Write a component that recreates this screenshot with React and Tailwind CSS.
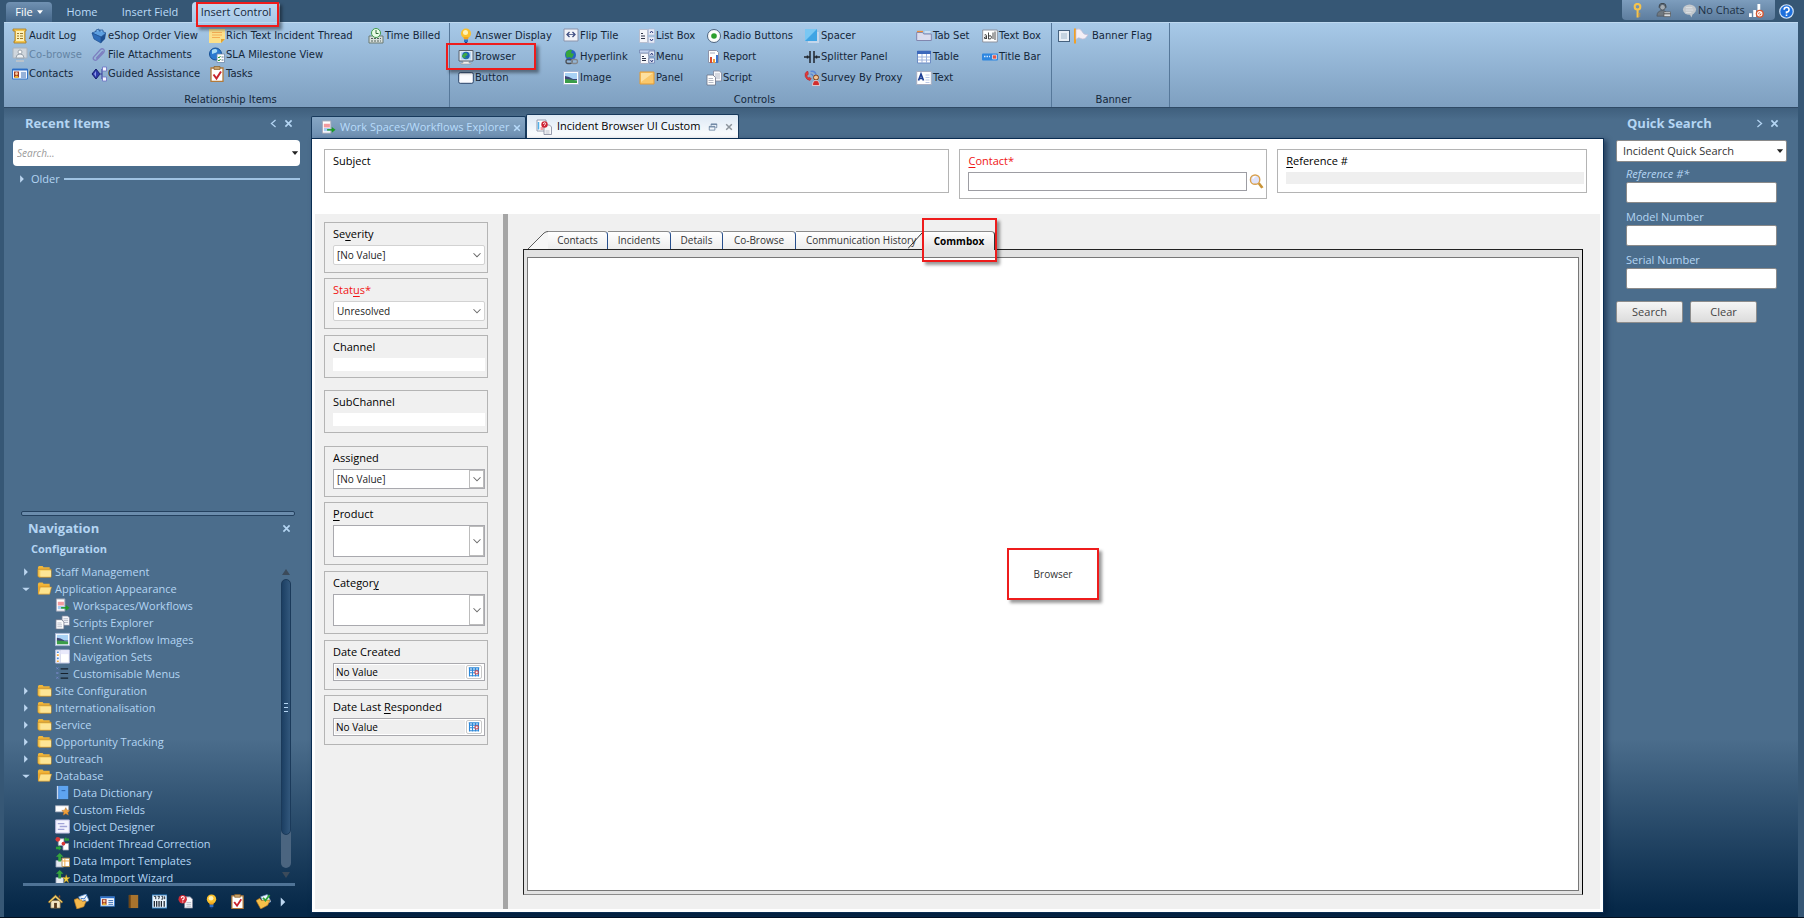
import React from "react";

const OPEN = "font-['Open_Sans','Noto_Sans',sans-serif]";
const DEJA = "font-['DejaVu_Sans',sans-serif]";

const page = (
  <path d="M2.5 1.5h8l2 2v10h-10z" fill="#fff" stroke="#8d93a8" />
);

const icons = {
  auditLog: (
    <>
      <path d="M3 1h11v2h-1v10h1v2H2v-2h1V3H1V1z" fill="#f3c64f" stroke="#a9781c" strokeWidth=".8" />
      <path d="M4 3h8v10H4z" fill="#fdf0b8" />
      <path d="M5 5.5h2M8 5.5h3M5 8h2M8 8h3M5 10.500h2M8 10.500h3" stroke="#9c7a2b" />
    </>
  ),
  cobrowse: (
    <>
      <path d="M1 1h14v10H1z" fill="#cfd6dd" stroke="#a9b3bd" />
      <circle cx="8" cy="5" r="2" fill="#fff" stroke="#9aa4ae" />
      <path d="M4 11q0-4 4-4t4 4z" fill="#eef1f4" stroke="#9aa4ae" />
      <path d="M4 13h8v2H4z" fill="#b9c2cb" />
    </>
  ),
  contacts: (
    <>
      <path d="M.5 3h15v10H.5z" fill="#f3f8ff" stroke="#3577c9" />
      <path d="M0 3h16v1.500H0z" fill="#2d6ec6" />
      <path d="M2 5.500h5v6H2z" fill="#a23a22" />
      <circle cx="4.500" cy="7.500" r="1.500" fill="#f6c79c" />
      <path d="M2.500 12q0-2.500 2-2.500t2 2.500z" fill="#e8b637" />
      <path d="M9 7h5M9 9h5M9 11h5" stroke="#3a6db3" />
    </>
  ),
  eshop: (
    <>
      <path d="M1 5l7-3 7 3-5 4z" fill="#5d9fe0" stroke="#1e4f91" strokeWidth=".7" />
      <path d="M1 5l9 4v6l-7-4z" fill="#2e6dba" stroke="#1e4f91" strokeWidth=".7" />
      <path d="M10 9l5-4-1 6-4 4z" fill="#1d4f92" />
      <path d="M5 4V2l3-1v2M9 4V2l3 0v2" fill="#78b4ec" stroke="#1e4f91" strokeWidth=".7" />
    </>
  ),
  clip: (
    <path
      d="M13 5l-7 7.500q-1.500 1.500-3 .3t-.2-3L9.500 2.500q1.500-1.500 3-.2t.2 3.200L6.500 12M11.500 4.500L5.500 11"
      fill="none"
      stroke="#7d7fc0"
      strokeWidth="1.300"
      strokeLinecap="round"
    />
  ),
  guided: (
    <>
      <path d="M1 8l4-5 4 5-4 5z" fill="#2c39a8" stroke="#151d6d" />
      <path d="M3 8l2-3v6z" fill="#8d98e8" />
      <path d="M8 8h3M11 3v10M11 3h1M11 13h1" stroke="#3a3f9c" fill="none" />
      <path d="M11.500 1h4v4h-4zM11.500 11h4v4h-4z" fill="#f5f6ff" stroke="#6a6fc4" strokeWidth=".8" />
    </>
  ),
  note: (
    <>
      <path d="M0 1h16v10l-4 4H0z" fill="#fbe08a" />
      <path d="M3 4.500h10M3 7h10M3 9.500h8" stroke="#f3a64e" strokeWidth=".9" />
      <path d="M16 11l-4 4v-4z" fill="#e2a22f" />
    </>
  ),
  sla: (
    <>
      <circle cx="6.500" cy="7" r="6" fill="#2b7ad0" stroke="#154f93" />
      <path d="M3 3q4-2 5 0t-2 3-3 1z" fill="#a8dcf5" />
      <path d="M8 7h7.500v8.500H8z" fill="#fff" stroke="#6e88a8" strokeWidth=".8" />
      <path d="M9 10l1 1 1.500-2M9 13l1 1 1.500-2" stroke="#2b9c34" fill="none" />
      <path d="M12.500 10h2M12.500 13h2" stroke="#5c6f8d" />
    </>
  ),
  tasks: (
    <>
      <path d="M2 2h12v13.500H2z" fill="#fff" stroke="#b27a3a" strokeWidth="1.300" />
      <path d="M5 .5h6v3H5z" fill="#c9a36a" stroke="#8a5d24" strokeWidth=".7" />
      <path d="M4.500 8.500l3 4 4.500-7" fill="none" stroke="#c8232d" strokeWidth="2" />
    </>
  ),
  timeBilled: (
    <>
      <path d="M1 8h14v7H1z" fill="#d8dfdc" stroke="#6b7a73" />
      <path d="M3 10.500h2M6 10.500h2M9 10.500h2M12 10.500h1M3 13h2M6 13h2M9 13h2M12 13h1" stroke="#55645d" />
      <circle cx="8" cy="5" r="4.500" fill="#e9fbe7" stroke="#3f9a4a" />
      <path d="M8 2v3.500h2.500" fill="none" stroke="#2d6b35" />
    </>
  ),
  bulb: (
    <>
      <circle cx="8" cy="5.500" r="5" fill="#fbc12d" />
      <circle cx="7.500" cy="4.500" r="2.500" fill="#fff3b8" />
      <path d="M5.500 9h5l-.5 2.500h-4z" fill="#f3a31d" />
      <path d="M6 11.500h4V14H6z" fill="#2f6fc4" />
      <path d="M6.500 14h3l-1 1.500h-1z" fill="#1c3f7c" />
    </>
  ),
  browser: (
    <>
      <path d="M1 1.500h14v10.500H1z" fill="#e4ecf5" stroke="#59616d" />
      <path d="M3 3h10v7.500H3z" fill="#b5d5f2" />
      <circle cx="8" cy="6.500" r="3.700" fill="#1c62b7" />
      <path d="M5.500 5q2-2 3.500-.5t-1 2.500 1 2-2 0-1.500-4z" fill="#3ea848" />
      <path d="M5 12.500h6v1.500h2v1H3v-1h2z" fill="#f0f0f0" stroke="#8c8c8c" strokeWidth=".5" />
    </>
  ),
  button: (
    <rect x=".7" y="2.700" width="14.600" height="10.600" rx="1.500" fill="#fbfcff" stroke="#2a4469" />
  ),
  flip: (
    <>
      <path d="M1 1h14v12H1z" fill="#f1f3f8" stroke="#8b93ab" />
      <path d="M6.500 4L4 6.500 6.500 9M9.500 4L12 6.500 9.500 9" fill="none" stroke="#3d4c80" strokeWidth="1.300" />
      <path d="M4 6.500h8" stroke="#3d4c80" strokeWidth=".8" />
    </>
  ),
  hyperlink: (
    <>
      <circle cx="7.500" cy="6" r="5.500" fill="#2a62c4" />
      <path d="M3 3q3-3 6-2l-1 3 3 1-2 4-3-1-2 1q-2-3-1-6z" fill="#35a53c" />
      <rect x="3" y="10.500" width="6" height="4" rx="2" fill="none" stroke="#4b4f55" strokeWidth="1.300" />
      <rect x="8.500" y="10.500" width="6" height="4" rx="2" fill="none" stroke="#84888d" strokeWidth="1.300" />
    </>
  ),
  image: (
    <>
      <path d="M.5 1.500h15v13H.5z" fill="#fff" stroke="#a6b6d6" />
      <path d="M2 3h12v10H2z" fill="#a9d2f5" />
      <path d="M2 6l4 1 4 2 4 0v1H2z" fill="#3d4377" />
      <path d="M2 9q5 0 12 1.500V13H2z" fill="#3a9c48" />
    </>
  ),
  listBox: (
    <>
      <path d="M.5 1.500h8v13h-8z" fill="#f4f5fa" stroke="#b8bfd0" />
      <path d="M2 5.500h2M2 8h4M2 10.500h4" stroke="#30354a" />
      <path d="M9.500 1h6v6h-6zM9.500 9h6v6h-6z" fill="#e7ecf8" stroke="#b4bcd6" strokeWidth=".7" />
      <path d="M11 5l1.500-2L14 5M11 11l1.500 2 1.500-2" fill="none" stroke="#2c3a7c" />
    </>
  ),
  menu: (
    <>
      <path d="M.5 1h15v3H.5z" fill="#c5d3ee" stroke="#6c7eaa" strokeWidth=".7" />
      <path d="M1.500 4.500h8v10h-8z" fill="#f6f7fb" stroke="#a7afc4" />
      <path d="M3 7.500h2M3 9.500h4M3 11.500h4" stroke="#30354a" />
      <path d="M10 2h5.500v5H10zM10 9h5.500v5H10z" fill="#e7ecf8" stroke="#6678ad" strokeWidth=".7" />
      <path d="M11.500 6l1.200-2L14 6M11.500 11l1.200 2 1.300-2" fill="none" stroke="#2c3a7c" />
    </>
  ),
  panel: (
    <>
      <path d="M1 2h14v12H1z" fill="#fbc96c" stroke="#e39b35" />
      <path d="M2 3h12L2 12z" fill="#fde0a0" />
    </>
  ),
  radio: (
    <>
      <circle cx="8" cy="8" r="6.500" fill="#fbfdfb" stroke="#4d6480" />
      <circle cx="8" cy="8" r="2.800" fill="#2ca02c" />
    </>
  ),
  report: (
    <>
      {page}
      <path d="M4 8h2v6H4z" fill="#d84a33" />
      <path d="M7 10h2v4H7z" fill="#f0a03a" />
      <path d="M10 6h2v8h-2z" fill="#3c74cc" />
      <path d="M4 4h5" stroke="#a8aec0" />
    </>
  ),
  script: (
    <>
      <path d="M7.500 1h6l2 2v8h-8z" fill="#f6f7fb" stroke="#7d8398" strokeWidth=".8" />
      <path d="M9 4h5M9 6h5M9 8h5" stroke="#a3a8b8" strokeWidth=".8" />
      <path d="M1 5h6l2.500 2.500V15H1z" fill="#fff" stroke="#6d7388" strokeWidth=".8" />
      <path d="M2.500 8.500H7M2.500 10.500h5M2.500 12.500h5" stroke="#a3a8b8" strokeWidth=".8" />
    </>
  ),
  spacer: (
    <>
      <path d="M4 4h11v11H4z" fill="#d4dff0" opacity=".7" />
      <path d="M1 1h12v12H1z" fill="#3fa4e4" />
      <path d="M1 1h12L1 13z" fill="#79c7f3" />
    </>
  ),
  splitter: (
    <path d="M0 8h6M10 8h6M6 2v12M10 2v12M3.500 6.500v3M12.500 6.500v3" stroke="#20262e" strokeWidth="1.500" fill="none" />
  ),
  survey: (
    <>
      <path d="M3.500 1Q0 3 1.200 6.500T6 10.500l1.200-2-2-1.300-1 .8Q2.800 6.500 3 5l1.300-.6-.2-2.300z" fill="#e23b3b" stroke="#a81f24" strokeWidth=".5" />
      <path d="M6.500 1.500q4.500-1 5.500 3M6.500 4q2 0 2.500 2" fill="none" stroke="#5c86d8" strokeWidth="1.400" />
      <circle cx="12" cy="7.500" r="2.500" fill="#f4c391" stroke="#7b3d1a" />
      <path d="M8.500 15.500q0-5 3.500-5t3.500 5z" fill="#d12d2d" stroke="#fff" strokeWidth=".6" />
    </>
  ),
  tabSet: (
    <>
      <path d="M.7 12.500V4.500h6l1 1.500h7.600v6.500z" fill="#dadcee" stroke="#8186ae" />
      <path d="M1 3.500h6" stroke="#ee8f3c" strokeWidth="1.300" />
      <path d="M8.500 4h6" stroke="#f7f8ff" />
    </>
  ),
  table: (
    <>
      <path d="M1.500 2h13v12h-13z" fill="#fff" stroke="#6d8cc4" />
      <path d="M1 2h14v3H1z" fill="#3c68bb" />
      <path d="M6 5v9M10.500 5v9M2 8h12M2 11h12" stroke="#9db2dc" />
    </>
  ),
  text: (
    <>
      <path d="M.7 1.500h14.600v13H.7z" fill="#fff" stroke="#a7aec2" />
      <path d="M2.500 10.500L5 4l2.500 6.500M3.500 8.500h3" fill="none" stroke="#1d3f95" strokeWidth="1.700" />
      <path d="M9.500 5h4M9.500 7.500h4M9.500 10h4M9.500 12.500h4" stroke="#a9bbe2" strokeWidth=".8" />
    </>
  ),
  textBox: (
    <>
      <path d="M.7 2h14.600v12H.7z" fill="#fff" stroke="#8e939f" />
      <path
        d="M2.500 7q2-1 2 .8V11M4.500 8.800q-2.300 0-2.300 1.200t2.300.3M6.500 4.500V11q3 .5 3-1.800T6.500 8M11 4.500V11M13 3.500V12"
        fill="none"
        stroke="#333"
        strokeWidth=".9"
      />
    </>
  ),
  titleBar: (
    <>
      <rect x="0" y="4.500" width="16" height="7" rx="1" fill="#2d86e0" />
      <path d="M2 7.500h6" stroke="#cfe6ff" strokeWidth="1.500" strokeDasharray="1.500 1" />
      <path d="M10.500 6h4v4h-4z" fill="#e0584a" stroke="#fff" strokeWidth=".6" />
    </>
  ),
  flag: (
    <>
      <path d="M1 .5h2v15H1z" fill="#f0a026" />
      <path d="M3 1.500q4-2 6 2t6 3q-3 6-7 4-3-2-5 1z" fill="#f4eff6" stroke="#c9bfd6" strokeWidth=".7" />
    </>
  ),
  folder: (
    <>
      <path d="M1 3.500l1-1.500h4l1 1.500h6.500v2H1z" fill="#f0b63a" />
      <path d="M1 5.500h14v8.500H2L1 13z" fill="#f7cc5a" stroke="#d18c1c" strokeWidth=".8" />
      <path d="M3.500 7H15v6.500H3.500z" fill="#fde596" />
    </>
  ),
  folderOpen: (
    <>
      <path d="M1 3l1-1.500h4L7 3h6.500v3H1z" fill="#f0b63a" />
      <path d="M1 5h12.500v9H1z" fill="#eba82c" />
      <path d="M3.500 6.500h12L13.500 14H1.500z" fill="#fde38d" stroke="#d18c1c" strokeWidth=".6" />
    </>
  ),
  workspace: (
    <>
      <path d="M1.500 1h9v13h-9z" fill="#fff" stroke="#a4a8b8" />
      <path d="M3 4h6.500v4H3z" fill="#f29a9f" />
      <path d="M3 8.500h6.500V12H3z" fill="#a9cdf4" />
      <path d="M6.500 10.500h6" stroke="#1d9a27" strokeWidth="1.600" />
      <path d="M11.500 7.500l4 3-4 3z" fill="#1d9a27" />
    </>
  ),
  navSets: (
    <>
      <path d="M.7 1h14.600v14H.7z" fill="#fff" stroke="#b9bfe0" />
      <path d="M5.500 1v14" stroke="#c3c8e4" />
      <path d="M6 1.500h9v4H6z" fill="#e9e9fb" />
      <path d="M2 3.500h2M2 10h2" stroke="#4d8be0" strokeWidth="1.700" />
      <path d="M2 6.500h2M2 13h2" stroke="#f5a93e" strokeWidth="1.700" />
    </>
  ),
  customMenus: (
    <>
      <path d="M6 3h8M6 8h8M6 13h8" stroke="#16202c" strokeWidth="1.300" />
      <path d="M1.500 1.500l2 2M3.500 1.500l-2 2M1.500 6.500l2 2M3.500 6.500l-2 2M1.500 11.500l2 2M3.500 11.500l-2 2" stroke="#7486c4" />
    </>
  ),
  dictionary: (
    <>
      <path d="M2 1h12v14H2z" fill="#3d86dd" />
      <path d="M4.500 1H14v14H4.500z" fill="#5ea4f0" />
      <path d="M2 1h1.500v14H2z" fill="#c9d7ec" />
      <path d="M7 6h4" stroke="#2b62ac" />
    </>
  ),
  customFields: (
    <>
      <path d="M.5 4h14v6.500H.5z" fill="#fff" stroke="#a9b0c0" strokeWidth=".8" />
      <path d="M11.500 6l1.300 2.700 3 .3-2.200 2 .7 3-2.800-1.600L8.700 14l.7-3-2.200-2 3-.3z" fill="#f0a03a" stroke="#a8682a" strokeWidth=".5" />
    </>
  ),
  objectDesigner: (
    <>
      <path d="M.7 1h14.600v14H.7z" fill="#f4f4ff" stroke="#b7b9de" />
      <path d="M3 5h7M5 8h8M3 11h7" stroke="#a2a4d8" strokeWidth="1.400" />
    </>
  ),
  thread: (
    <>
      <path d="M3.500 3h6v7h-6zM8.500 8h6v7h-6z" fill="#fff" stroke="#9da1b4" strokeWidth=".8" />
      <circle cx="3" cy="3.500" r="2.500" fill="#d93636" />
      <circle cx="9" cy="8" r="2" fill="#d93636" />
      <path d="M9.500 3.500L12 1v1.700h3V5h-3v1z" fill="#2ba338" />
      <path d="M1 11.500h3V10l3 3-3 2.500V14H1z" fill="#2ba338" />
    </>
  ),
  importTemplates: (
    <>
      <path d="M1 8h8v7H1z" fill="#e6ebf2" stroke="#8f9ab0" strokeWidth=".8" />
      <path d="M7.500 5.500h8v9h-8z" fill="#fff" stroke="#b58f4c" />
      <path d="M8 8.500h7M10.500 6v8" stroke="#f1a33a" />
      <path d="M5 0l4 4H6.500v5h-3V4H1z" fill="#35a53c" />
    </>
  ),
  importWizard: (
    <>
      <path d="M1 8h8v7H1z" fill="#e6ebf2" stroke="#8f9ab0" strokeWidth=".8" />
      <path d="M12 5l1 3h3l-2.500 2 1 3.500L12 11.500 9.500 13.500l1-3.500L8 8h3z" fill="#f4d23d" stroke="#a8862a" strokeWidth=".5" />
      <path d="M5 0l4 4H6.500v5h-3V4H1z" fill="#35a53c" />
    </>
  ),
  home: (
    <>
      <path d="M3 7h10v8H3z" fill="#f5e6c4" stroke="#8d6b3b" strokeWidth=".7" />
      <path d="M0 8.500L8 1l8 7.500-1.500 1L8 4 1.500 9.500z" fill="#f2cf6d" stroke="#7c5a1e" strokeWidth=".7" />
      <path d="M6.500 9.500h3V15h-3z" fill="#5a3a1c" />
      <path d="M11.500 1.500H13v3l-1.500-1.500z" fill="#9b4a24" />
    </>
  ),
  mailFolder: (
    <>
      <path d="M5 3l8-3 3 7-8 4z" fill="#f4f8fd" stroke="#4f87c7" strokeWidth=".8" />
      <path d="M7 4.500l4 .8 2.500-4M8.500 8l4-1.500" fill="none" stroke="#2e6fc0" />
      <path d="M0 6l4-1.500 2 2L8 6l1 2 4-.5-2.500 6L3 16z" fill="#f5b94c" stroke="#b5761e" strokeWidth=".7" />
    </>
  ),
  book: (
    <>
      <path d="M3 1h10v14H3z" fill="#a8742e" />
      <path d="M3 1h2v14H3z" fill="#6d4515" />
    </>
  ),
  barcode: (
    <>
      <path d="M0 1h16v14H0z" fill="#e9f3fb" stroke="#2a7bc0" />
      <path d="M2 2.500h2v3M6 2.500h2L7 5.500M10 2.500h1.500v3H10M13.500 2.500v3" fill="none" stroke="#18222e" />
      <path d="M2.500 7.500v6M5 7.500v6M7.500 7.500v6M10 7.500v6M13 7.500v6" stroke="#18222e" strokeWidth="1.300" />
    </>
  ),
  incident: (
    <>
      <path d="M7 3h6l2.500 2.500V15H7z" fill="#f7f8fb" stroke="#80869a" strokeWidth=".8" />
      <path d="M9 9h5M9 11h5M9 13h5" stroke="#a3a8b8" strokeWidth=".8" />
      <circle cx="5" cy="5.500" r="4.500" fill="#d02c38" />
      <path d="M3.500 4.500q0-1.700 1.600-1.700t1.500 1.500-1.500 1.700v1M5.100 8v1" fill="none" stroke="#fff" strokeWidth="1.200" />
    </>
  ),
  mailCheck: (
    <>
      <path d="M5 3l7-2.500L16 8l-7 4z" fill="#eef5fd" stroke="#6d93c4" strokeWidth=".7" />
      <path d="M0 7l4-2.500 2 2.500 9-.5-2.500 5.500L5 16z" fill="#f5bf4a" stroke="#a96d1a" strokeWidth=".7" />
      <path d="M7.500 4l2.500 3 4.500-6" fill="none" stroke="#2fa53a" strokeWidth="2" />
    </>
  ),
  incidentTab: (
    <>
      <path d="M1 1h9v11H1z" fill="#fff" stroke="#8d93a8" strokeWidth=".9" />
      <path d="M2.500 3v7.500" stroke="#4fb0ea" strokeWidth="1.500" />
      <path d="M4.500 8h3v3h-3z" fill="#f3a1a8" />
      <path d="M8 6h5.500L15.500 8v7.500H8z" fill="#f7f8fb" stroke="#80869a" strokeWidth=".8" />
      <path d="M9.500 12h4M9.500 14h4" stroke="#b0b4c2" strokeWidth=".8" />
      <circle cx="8.500" cy="5.500" r="3.200" fill="#cf2436" />
      <path d="M7.500 5q0-1.300 1-1.300t1 1-1 1.400v.7" fill="none" stroke="#fff" strokeWidth=".9" />
    </>
  ),
  magnifier: (
    <>
      <path d="M9 10l4 5.500 2.500-1.500-4-5z" fill="#c99437" />
      <circle cx="6.500" cy="6" r="5" fill="#dfe3fb" stroke="#d9a04d" strokeWidth="1.500" />
      <path d="M4 5q1-2.500 3-2.500" fill="none" stroke="#fff" strokeWidth="1.300" />
    </>
  ),
  calendar: (
    <>
      <path d="M1.500 2h13v12h-13z" fill="#fff" />
      <path d="M1 2.500h14M2 5.500h12M2 9h12M2 13h12M2 2v12M6 2v12M10 2v12M14 2v12" stroke="#2b87d8" strokeWidth="1.500" />
      <path d="M9.500 6.500h4v4h-4z" fill="#fff" stroke="#c8323a" strokeWidth="1.300" />
    </>
  ),
  key: (
    <>
      <circle cx="8" cy="4" r="3" fill="none" stroke="#f5c34c" strokeWidth="2.200" />
      <path d="M7 7h2.200v8.500H7z" fill="#f5c34c" />
      <path d="M9 11h2v1.200H9zM9 13.200h2v1.300H9z" fill="#d9962b" />
    </>
  ),
  agent: (
    <>
      <circle cx="7" cy="4.500" r="3" fill="#a3abb2" stroke="#4f5861" />
      <path d="M3.500 5Q3 .5 7 .5T10.500 5" fill="none" stroke="#3f4850" strokeWidth="1.200" />
      <path d="M1 14q0-6 6-6 3 0 4 2v4z" fill="#6f7880" stroke="#4a535b" strokeWidth=".7" />
      <path d="M8.500 9.500h7v5h-7z" fill="#d9dde1" stroke="#555" strokeWidth=".7" />
      <path d="M8.500 11.500h7" stroke="#444" />
    </>
  ),
  chat: (
    <>
      <ellipse cx="8" cy="7" rx="7" ry="5.500" fill="#c3c8cd" />
      <path d="M8 11.500l2 4 2-5z" fill="#c3c8cd" />
      <path d="M4 5h7M4 7.500h8M4 10h6" stroke="#dfe3e6" />
    </>
  ),
  signal: (
    <>
      <path d="M0 11h3v4H0zM4.500 7.500h3V15h-3zM9 1h3v14H9z" fill="#fff" />
      <circle cx="11.500" cy="11.500" r="4.300" fill="#d9562f" />
      <circle cx="11.500" cy="11.500" r="2.300" fill="none" stroke="#fff" strokeWidth="1.100" />
      <path d="M10 13l3-3" stroke="#fff" strokeWidth="1.100" />
    </>
  ),
  help: (
    <>
      <circle cx="8" cy="8" r="7.200" fill="#1d6fdc" stroke="#cfe2f7" strokeWidth="1.300" />
      <path d="M5.500 6q0-2.500 2.600-2.500T10.700 6 8 8.600V10M8 11.300v1.500" fill="none" stroke="#fff" strokeWidth="1.700" />
    </>
  ),
  chevron: <path d="M4 6l4 4 4-4" fill="none" stroke="#6a6a6a" strokeWidth="1.200" />,
  caret: <path d="M3 5h10l-5 6z" fill="#222" />,
  close: <path d="M3.500 3.500l9 9M12.500 3.500l-9 9" stroke="currentColor" strokeWidth="2.400" fill="none" />,
  pinLeft: <path d="M11 3L5 8l6 5" stroke="currentColor" strokeWidth="1.800" fill="none" />,
  pinRight: <path d="M5 3l6 5-6 5" stroke="currentColor" strokeWidth="1.800" fill="none" />,
  restore: (
    <path d="M5 3h9v6h-2M5 3v3M5 4h9M2 7h9v6H2zM2 8h9" stroke="#5b7596" strokeWidth="1.200" fill="none" />
  ),
  right: <path d="M5 2l6 6-6 6z" fill="#bcd6f0" />,
  down: <path d="M2 6h12l-6 5z" fill="#bcd6f0" />,
};

function Icon({ name, className = "size-4" }) {
  return (
    <svg viewBox="0 0 16 16" aria-hidden="true" className={`shrink-0 ${className}`}>
      {icons[name]}
    </svg>
  );
}

function Highlight({ className }) {
  return (
    <span
      aria-hidden="true"
      className={`pointer-events-none absolute z-10 border-2 border-[#ee1c1c] shadow-[3px_3px_3px_rgba(0,0,0,0.4)] ${className}`}
    />
  );
}

function RibbonButton({ icon, label, disabled, marked }) {
  return (
    <button
      type="button"
      disabled={disabled}
      className={`relative flex items-center gap-px whitespace-nowrap text-left ${disabled ? "text-[#6484a4]" : "text-[#14273a]"}`}
    >
      <Icon name={icon} />
      {label}
      {marked && <Highlight className="-top-[6px] -left-[12px] h-[27px] w-[90px]" />}
    </button>
  );
}

const relationship = [
  [["auditLog", "Audit Log"], ["cobrowse", "Co-browse", true], ["contacts", "Contacts"]],
  [["eshop", "eShop Order View"], ["clip", "File Attachments"], ["guided", "Guided Assistance"]],
  [["note", "Rich Text Incident Thread"], ["sla", "SLA Milestone View"], ["tasks", "Tasks"]],
  [["timeBilled", "Time Billed"]],
];

const controls = [
  [["bulb", "Answer Display"], ["browser", "Browser"], ["button", "Button"]],
  [["flip", "Flip Tile"], ["hyperlink", "Hyperlink"], ["image", "Image"]],
  [["listBox", "List Box"], ["menu", "Menu"], ["panel", "Panel"]],
  [["radio", "Radio Buttons"], ["report", "Report"], ["script", "Script"]],
  [["spacer", "Spacer"], ["splitter", "Splitter Panel"], ["survey", "Survey By Proxy"]],
  [["tabSet", "Tab Set"], ["table", "Table"], ["text", "Text"]],
  [["textBox", "Text Box"], ["titleBar", "Title Bar"]],
];

function Ribbon() {
  const group = "flex flex-col justify-between border-r border-[#56789a]";
  const title = "text-center leading-[14px]";
  return (
    <div
      className={`flex h-[86px] border-t border-[#bdd8f0] border-b border-b-[#2f4a66] bg-linear-to-b from-[#a7c9e8] to-[#7e9fc0] text-[10px] leading-4 text-[#14273a] ${DEJA}`}
    >
      <section className={`${group} w-[446px] pl-2`}>
        <div className="grid grid-cols-[79px_118px_159px_82px] pt-[5px]">
          {relationship.map((col, i) => (
            <div key={i} className="flex flex-col gap-[3px]">
              {col.map(([icon, label, disabled]) => (
                <RibbonButton key={label} icon={icon} label={label} disabled={disabled} />
              ))}
            </div>
          ))}
        </div>
        <h2 className={title}>Relationship Items</h2>
      </section>
      <section className={`${group} w-[602px] pl-2`}>
        <div className="grid grid-cols-[105px_76px_67px_98px_112px_66px_70px] pt-[5px]">
          {controls.map((col, i) => (
            <div key={i} className="flex flex-col gap-[5px]">
              {col.map(([icon, label]) => (
                <RibbonButton key={label} icon={icon} label={label} marked={label === "Browser"} />
              ))}
            </div>
          ))}
        </div>
        <h2 className={title}>Controls</h2>
      </section>
      <section className={`${group} w-[118px] pl-1.5`}>
        <label className="flex items-center gap-[3px] pt-[5px]">
          <input
            type="checkbox"
            className="size-3 appearance-none border border-[#45617e] bg-[#c4d3e0] shadow-[inset_0_0_0_2px_#e8eff6]"
          />
          <Icon name="flag" />
          Banner Flag
        </label>
        <h2 className={title}>Banner</h2>
      </section>
    </div>
  );
}

function TopBar() {
  const tab = "flex h-5 items-center justify-center text-[11px]";
  return (
    <header className="flex items-end justify-between pl-0.5">
      <nav aria-label="Ribbon tabs" className="flex h-[22px] items-end text-[#bcdcf8]">
        <button
          type="button"
          className={`${tab} w-[46px] gap-1 rounded-t-sm bg-linear-to-b from-[#7091b2] to-[#45678a] text-white`}
        >
          File
          <svg viewBox="0 0 8 5" aria-hidden="true" className="h-1 w-1.5">
            <path d="M0 0h8L4 5z" fill="#fff" />
          </svg>
        </button>
        <button type="button" className={`${tab} w-[60px]`}>Home</button>
        <button type="button" className={`${tab} w-[76px]`}>Insert Field</button>
        <button
          type="button"
          className={`${tab} relative ml-1 w-[88px] rounded-t-sm bg-linear-to-b from-[#c0daf2] to-[#a7c9e8] text-[#14273a]`}
        >
          Insert Control
          <Highlight className="top-0 left-1 h-[25px] w-[83px]" />
        </button>
      </nav>
      <div className="flex h-[22px] items-start gap-1">
        <div className="flex h-5 w-[153px] items-center rounded-b-sm bg-linear-to-b from-[#7d9dbd] to-[#5d7d9e] pl-2 text-[11px] text-[#1d3044]">
          <Icon name="key" className="size-[15px]" />
          <Icon name="agent" className="ml-[11px] size-[15px]" />
          <Icon name="chat" className="ml-[11px] size-[15px]" />
          <span className="ml-px whitespace-nowrap">No Chats</span>
          <Icon name="signal" className="ml-1 size-[15px]" />
        </div>
        <button type="button" aria-label="Help" className="mt-1 mr-1">
          <Icon name="help" className="size-[15px]" />
        </button>
      </div>
    </header>
  );
}

const tree = [
  { label: "Staff Management" },
  {
    label: "Application Appearance",
    children: [
      ["workspace", "Workspaces/Workflows"],
      ["script", "Scripts Explorer"],
      ["image", "Client Workflow Images"],
      ["navSets", "Navigation Sets"],
      ["customMenus", "Customisable Menus"],
    ],
  },
  { label: "Site Configuration" },
  { label: "Internationalisation" },
  { label: "Service" },
  { label: "Opportunity Tracking" },
  { label: "Outreach" },
  {
    label: "Database",
    children: [
      ["dictionary", "Data Dictionary"],
      ["customFields", "Custom Fields"],
      ["objectDesigner", "Object Designer"],
      ["thread", "Incident Thread Correction"],
      ["importTemplates", "Data Import Templates"],
      ["importWizard", "Data Import Wizard"],
    ],
  },
];

const shortcuts = [
  ["home", "Home"],
  ["mailFolder", "Mail"],
  ["contacts", "Contacts"],
  ["book", "Accounts"],
  ["barcode", "Products"],
  ["incident", "Incidents"],
  ["bulb", "Answers"],
  ["tasks", "Tasks"],
  ["mailCheck", "Surveys"],
];

function PanelHeader({ title, pin, className }) {
  return (
    <div className={`flex items-center text-[#b4d5f3] ${className}`}>
      <h2 className="flex-1 text-[13px] leading-5 font-bold">{title}</h2>
      {pin && (
        <button type="button" aria-label={`Collapse ${title}`} className="mr-1">
          <Icon name={pin} className="size-[11px]" />
        </button>
      )}
      <button type="button" aria-label={`Close ${title}`}>
        <Icon name="close" className="size-[11px]" />
      </button>
    </div>
  );
}

function Sidebar() {
  return (
    <aside className="flex w-[307px] shrink-0 flex-col text-[11px] text-[#b4d5f3]">
      <section className="flex flex-1 flex-col pr-[11px] pl-[9px]">
        <PanelHeader title="Recent Items" pin="pinLeft" className="mb-0.5 h-[30px] pr-[6px] pl-3" />
        <div className="relative flex">
          <input
            aria-label="Search recent items"
            placeholder="Search..."
            className="h-[26px] flex-1 rounded-sm bg-white px-1 text-[10px] text-black placeholder:text-[#9a9a9a] placeholder:italic"
          />
          <Icon name="caret" className="absolute top-2 right-0 size-2.5" />
        </div>
        <div className="mt-[5px] flex items-center gap-1 pl-1">
          <Icon name="right" className="size-2.5" />
          <span>Older</span>
          <span className="h-0.5 flex-1 bg-[#9fc3e3]" />
        </div>
      </section>
      <section className="flex flex-col pr-3 pl-[17px]">
        <div className="mr-1 h-[5px] rounded-xs border border-[#24415f] bg-[#6b8cac]" />
        <PanelHeader title="Navigation" className="mt-0.5 pr-[7px] pl-[7px]" />
        <h3 className="pt-px pl-2.5 text-[11px] leading-5 font-bold">Configuration</h3>
        <div className="mt-1 flex h-[319px]">
          <ul className="flex-1 leading-[17px]">
            {tree.map((node) => (
              <li key={node.label}>
                <div className="flex h-[17px] items-center">
                  <Icon name={node.children ? "down" : "right"} className="mr-1.5 size-2.5" />
                  <Icon name={node.children ? "folderOpen" : "folder"} className="size-[15px]" />
                  <span className="ml-[3px] whitespace-nowrap">{node.label}</span>
                </div>
                {node.children && (
                  <ul>
                    {node.children.map(([icon, label]) => (
                      <li key={label} className="flex h-[17px] items-center pl-[34px]">
                        <Icon name={icon} className="size-[15px]" />
                        <span className="ml-[3px] whitespace-nowrap">{label}</span>
                      </li>
                    ))}
                  </ul>
                )}
              </li>
            ))}
          </ul>
          <div aria-hidden="true" className="mr-2 flex w-2.5 flex-col items-center gap-1 pt-1.5 pb-1">
            <svg viewBox="0 0 8 6" className="h-1.5 w-2">
              <path d="M4 0l4 6H0z" fill="#3b4a5a" />
            </svg>
            <div className="flex flex-1 flex-col self-stretch rounded-full bg-[#4b6580]">
              <div className="flex h-[256px] flex-col items-center justify-center gap-[3px] rounded-full border border-[#1b3a5a] bg-linear-to-r from-[#1c3f63] to-[#32577c]">
                <span className="h-px w-1 bg-[#b4d5f3]" />
                <span className="h-px w-1 bg-[#b4d5f3]" />
                <span className="h-px w-1 bg-[#b4d5f3]" />
              </div>
            </div>
            <svg viewBox="0 0 8 6" className="h-1.5 w-2">
              <path d="M4 6l4-6H0z" fill="#3b4a5a" />
            </svg>
          </div>
        </div>
        <div className="mt-px mr-1 ml-0.5 h-[3px] bg-[#4f7396]" />
        <div className="flex h-[31px] items-center pl-[27px]">
          <div className="flex gap-[11px]">
            {shortcuts.map(([icon, label]) => (
              <button key={label} type="button" aria-label={label}>
                <Icon name={icon} className="size-[15px]" />
              </button>
            ))}
          </div>
          <button type="button" aria-label="More" className="ml-1.5">
            <Icon name="right" className="size-3" />
          </button>
        </div>
      </section>
    </aside>
  );
}

const box = "border border-[#b4b4b4]";

function Caption({ text, mark, required, htmlFor }) {
  const at = mark ? text.indexOf(mark) : -1;
  return (
    <label htmlFor={htmlFor} className={`block text-[11px] leading-4 ${required ? "text-[#f01414]" : "text-black"}`}>
      {at < 0 ? (
        text
      ) : (
        <>
          {text.slice(0, at)}
          <u className="underline-offset-2">{mark}</u>
          {text.slice(at + 1)}
        </>
      )}
      {required && "*"}
    </label>
  );
}

function Field({ id, text, mark, required, className, children }) {
  return (
    <div className={`${box} px-[8px] pt-[3px] pr-[2px] ${className}`}>
      <Caption text={text} mark={mark} required={required} htmlFor={id} />
      {children}
    </div>
  );
}

function Combo({ id, value, framed, className }) {
  return (
    <div className={`relative mt-[3px] flex ${className}`}>
      <select
        id={id}
        className={`w-full appearance-none border bg-white pl-[3px] text-[10px] text-[#222] ${framed ? "border-[#a9a9ae]" : "rounded-xs border-[#d2d2d2]"}`}
      >
        <option>{value}</option>
      </select>
      <span
        className={`pointer-events-none absolute top-px right-px bottom-px flex w-[15px] items-center justify-center ${framed ? "border border-[#bcbcbc] bg-white" : ""}`}
      >
        <Icon name="chevron" className="size-3.5" />
      </span>
    </div>
  );
}

function DateField({ id }) {
  return (
    <div className="mt-[3px] flex h-[18px] items-center justify-between border border-[#a9a9ae] bg-white pr-0.5 pl-px">
      <input id={id} readOnly defaultValue="No Value" className="h-3.5 w-[130px] bg-[#efefef] pl-px text-[10px] text-black" />
      <button type="button" aria-label="Open calendar" className="rounded-xs border border-[#c9c9c9] px-px">
        <Icon name="calendar" className="size-3" />
      </button>
    </div>
  );
}

function FieldColumn() {
  const plain = "mt-[3px] block h-[13px] w-full bg-white";
  return (
    <div className={`w-[188px] shrink-0 pt-2 pr-[15px] pl-[9px] ${OPEN}`}>
      <Field id="severity" text="Severity" mark="v" className="h-[51px]">
        <Combo id="severity" value="[No Value]" className="h-5" />
      </Field>
      <Field id="status" text="Status" mark="u" required className="mt-[5px] h-[51px]">
        <Combo id="status" value="Unresolved" className="h-5" />
      </Field>
      <Field id="channel" text="Channel" className="mt-[6px] h-[43px]">
        <input id="channel" className={plain} />
      </Field>
      <Field id="subchannel" text="SubChannel" className="mt-3 h-[43px]">
        <input id="subchannel" className={plain} />
      </Field>
      <Field id="assigned" text="Assigned" className="mt-[13px] h-[51px]">
        <Combo id="assigned" value="[No Value]" framed className="h-5" />
      </Field>
      <Field id="product" text="Product" mark="P" className="mt-[5px] h-[63px]">
        <Combo id="product" value="" framed className="h-8" />
      </Field>
      <Field id="category" text="Category" mark="y" className="mt-[6px] h-[63px]">
        <Combo id="category" value="" framed className="h-8" />
      </Field>
      <Field id="created" text="Date Created" className="mt-[6px] h-[50px]">
        <DateField id="created" />
      </Field>
      <Field id="responded" text="Date Last Responded" mark="R" className="mt-[5px] h-[50px]">
        <DateField id="responded" />
      </Field>
    </div>
  );
}

function Slant() {
  return (
    <svg viewBox="0 0 20 18" aria-hidden="true" className="h-[18px] w-5 shrink-0">
      <path d="M0 18L16 2Q18 .5 20 .5V18z" fill="#f6f6f6" />
      <path d="M0 18L16 2Q18 .5 20 .5" fill="none" stroke="#5c5c5c" strokeWidth="1" />
    </svg>
  );
}

function TabSet() {
  const tab =
    "flex h-[18px] items-center justify-center rounded-tr-sm border-t border-r border-t-[#8b8b8b] border-r-[#274f8d] bg-linear-to-b from-white to-[#ededed] whitespace-nowrap";
  return (
    <div className="flex min-w-0 flex-1 flex-col pt-[17px] pr-[17px] pb-[14px] pl-[15px]">
      <div role="tablist" className="flex pl-[5px] text-[10px] text-[#333]">
        <Slant />
        <button role="tab" type="button" className={`${tab} w-[60px]`}>Contacts</button>
        <button role="tab" type="button" className={`${tab} w-[63px]`}>Incidents</button>
        <button role="tab" type="button" className={`${tab} w-[52px]`}>Details</button>
        <button role="tab" type="button" className={`${tab} w-[73px]`}>Co-Browse</button>
        <div className="flex h-[18px] w-[128px] items-center border-t border-[#8b8b8b] bg-linear-to-b from-white to-[#ededed]">
          <button role="tab" type="button" className="pl-[10px] whitespace-nowrap">Communication History</button>
        </div>
        <div className="relative -ml-4 flex">
          <svg viewBox="0 0 16 18" aria-hidden="true" className="h-[18px] w-4 shrink-0">
            <path d="M12 4L14 2Q15 .5 16 .5V18H12z" fill="#efefef" />
            <path d="M0 17.500L14 2Q15 .5 16 .5" fill="none" stroke="#333" />
          </svg>
          <button
            role="tab"
            type="button"
            aria-selected="true"
            className="-mb-px flex h-[19px] w-[71px] items-center justify-center rounded-tr-sm border-t border-r border-t-[#8b8b8b] border-r-[#333] bg-linear-to-b from-white to-[#e2e2e2] font-bold text-black"
          >
            Commbox
          </button>
          <Highlight className="-top-[13px] left-3.5 h-11 w-[75px]" />
        </div>
      </div>
      <div
        role="tabpanel"
        className="flex flex-1 border border-[#222] border-r-black border-b-[#8c8c8c] bg-[#e2e2e2] pt-[7px] pr-[3px] pb-[3px] pl-[3px]"
      >
        <div className="flex flex-1 items-center justify-center border border-[#777] bg-white">
          <div className="relative px-[27px] py-[19px] text-[10px] leading-[14px] text-[#333]">
            Browser
            <Highlight className="inset-0" />
          </div>
        </div>
      </div>
    </div>
  );
}

function Workspace() {
  return (
    <main className="flex min-w-0 flex-1 flex-col pt-[6px] pb-1">
      <div className="flex items-end text-[11px]">
        <div className="flex h-[22px] w-[215px] items-center rounded-t-xs border border-b-0 border-[#17395c] bg-linear-to-b from-[#86a6c4] to-[#6d8fb1] pl-[9px] text-[#b9dcfb]">
          <Icon name="workspace" className="size-[15px]" />
          <span className="ml-1 flex-1 whitespace-nowrap">Work Spaces/Workflows Explorer</span>
          <button type="button" aria-label="Close Work Spaces/Workflows Explorer" className="mr-[3px]">
            <Icon name="close" className="size-2.5" />
          </button>
        </div>
        <div className="flex h-6 w-[213px] items-center rounded-t-xs border border-b-0 border-[#17395c] bg-linear-to-b from-[#dde9f5] to-white pl-[9px] text-black">
          <Icon name="incidentTab" />
          <span className="ml-[5px] flex-1 whitespace-nowrap">Incident Browser UI Custom</span>
          <button type="button" aria-label="Float tab">
            <Icon name="restore" className="size-2.5" />
          </button>
          <button type="button" aria-label="Close Incident Browser UI Custom" className="mr-1 ml-1.5 text-[#8c949c]">
            <Icon name="close" className="size-2.5" />
          </button>
        </div>
      </div>
      <div className="flex flex-1 flex-col border border-[#0a2d52] bg-white px-[3px] pb-[3px] shadow-[3px_2px_5px_rgba(0,20,50,0.5)]">
        <div className="grid grid-cols-[626fr_308fr_310fr] items-start gap-2.5 pt-[10px] pr-[13px] pb-[15px] pl-[9px]">
          <div className={`${box} h-11 px-2 pt-[3px]`}>
            <Caption text="Subject" htmlFor="subject" />
            <input id="subject" className="block h-4 w-full" />
          </div>
          <div className={`${box} h-[50px] pt-[3px] pl-2`}>
            <Caption text="Contact" mark="C" required htmlFor="contact" />
            <div className="mt-[3px] flex items-center gap-0.5">
              <input id="contact" className="h-[19px] min-w-0 flex-1 border border-[#9d9da3] bg-white" />
              <button type="button" aria-label="Find contact" className="mr-0.5">
                <Icon name="magnifier" className="size-[15px]" />
              </button>
            </div>
          </div>
          <div className={`${box} h-11 pt-[3px] pr-0.5 pl-2`}>
            <Caption text="Reference #" mark="R" htmlFor="reference" />
            <input id="reference" readOnly className="mt-[3px] block h-3 w-full bg-[#efefef]" />
          </div>
        </div>
        <div className="flex flex-1 bg-[#f0f0f0]">
          <FieldColumn />
          <div className="w-[5px] bg-[#a5a5a5]" />
          <TabSet />
        </div>
      </div>
    </main>
  );
}

function SearchField({ id, label, italic }) {
  return (
    <div className="flex flex-col">
      <label htmlFor={id} className={`leading-4 ${italic ? "italic" : ""}`}>{label}</label>
      <input id={id} className="h-[21px] w-full rounded-xs border border-[#8a8a8a] bg-white px-1 text-black" />
    </div>
  );
}

function QuickSearch() {
  const button =
    "h-[22px] w-[67px] rounded-xs border border-[#8d8d8d] bg-linear-to-b from-[#f6f6f6] to-[#dcdcdc] text-[#444]";
  return (
    <aside className="w-[194px] shrink-0 pr-[11px] pl-3 text-[11px] text-[#b4d5f3]">
      <PanelHeader title="Quick Search" pin="pinRight" className="mb-0.5 h-[30px] pr-[7px] pl-[11px]" />
      <div className="relative flex">
        <select
          aria-label="Search type"
          className="h-[22px] w-full appearance-none rounded-xs border border-[#8a8a8a] bg-white pl-1.5 text-[#333]"
        >
          <option>Incident Quick Search</option>
        </select>
        <Icon name="caret" className="pointer-events-none absolute top-1.5 right-0.5 size-2.5" />
      </div>
      <form className="mt-1" onSubmit={(e) => e.preventDefault()}>
        <div className="flex flex-col gap-1.5 pr-2.5 pl-2.5">
          <SearchField id="ref" label="Reference #*" italic />
          <SearchField id="model" label="Model Number" />
          <SearchField id="serial" label="Serial Number" />
        </div>
        <div className="mt-3 flex gap-[7px]">
          <button type="submit" className={button}>Search</button>
          <button type="reset" className={button}>Clear</button>
        </div>
      </form>
    </aside>
  );
}

export default function App() {
  return (
    <div className={`flex min-h-screen flex-col border-b border-[#03101f] bg-[#365775] pr-1.5 pl-1 text-[11px] ${OPEN}`}>
      <TopBar />
      <Ribbon />
      <div className="flex flex-1 bg-[linear-gradient(to_bottom,#3f5f7d,#4b6d8c_12px,#4b6d8c_78%,#062848_99%)]">
        <Sidebar />
        <Workspace />
        <QuickSearch />
      </div>
    </div>
  );
}
